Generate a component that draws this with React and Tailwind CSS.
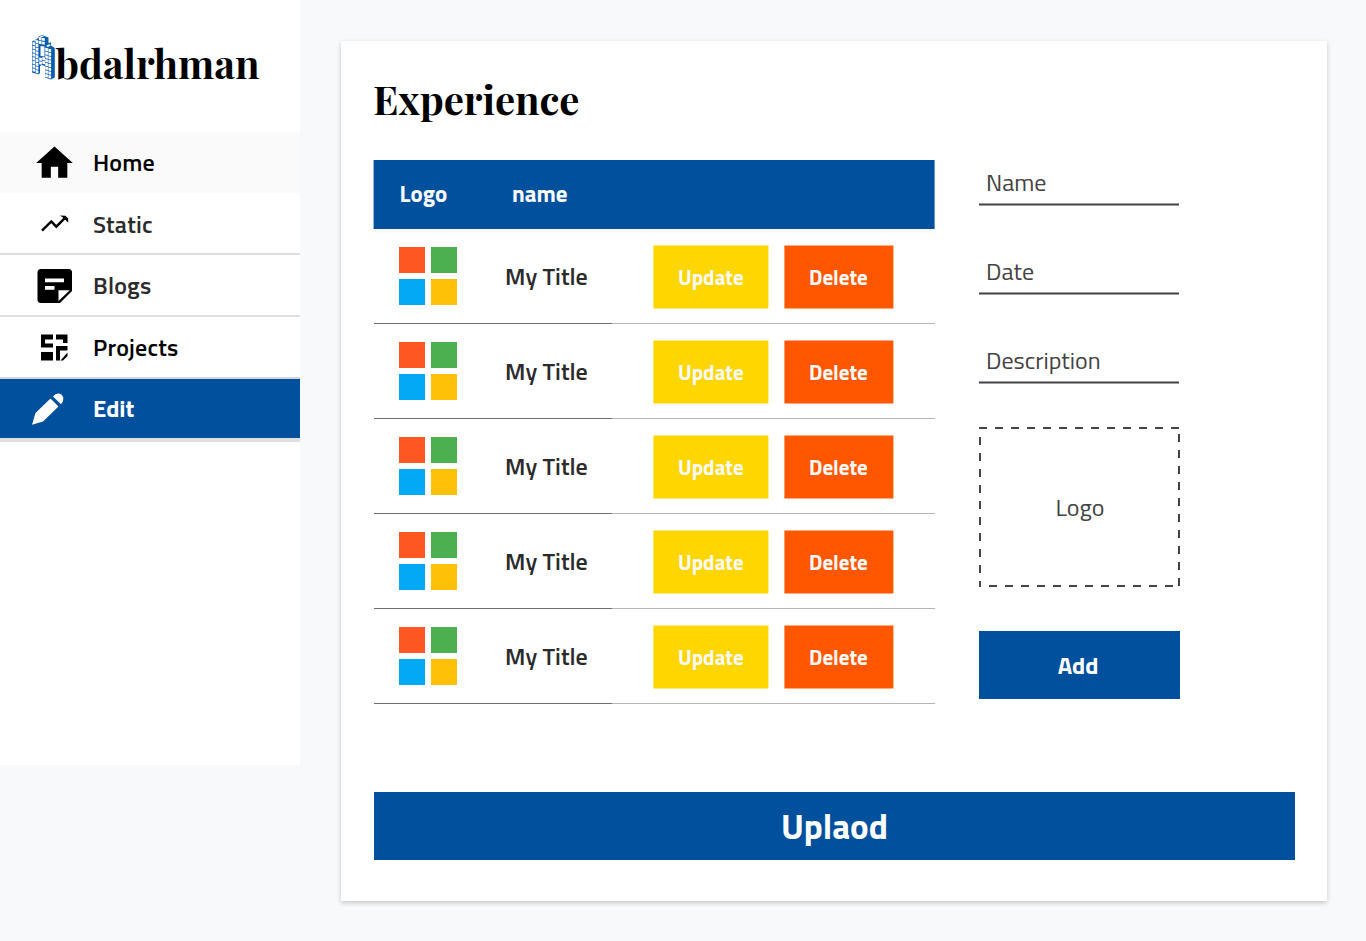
const sans = "font-['Titillium_Web','Cairo',Roboto,sans-serif]";

// Cube faces of the isometric letter: x, first y, number of faces
const faces = [
  [32.5, 42.1, 8],
  [35.7, 40.1, 9],
  [38.9, 37.1, 2],
  [42.1, 37.7, 2],
  [39.2, 57.5, 2],
  [42.3, 57.1, 2],
  [45.2, 47.8, 8],
  [48.4, 48.8, 8],
];

function Brand() {
  return (
    <svg viewBox="32 35 23.5 44.5" className="h-[44.5px] w-[23.5px] shrink-0" aria-hidden="true">
      <path fill="#0a5cb0" fillRule="evenodd" d="M32 41.500L38.500 38V36.500L42 35L48.500 37.500V43L51 42.500V45.500L54.800 48V77.500L51 79.500L45 77.500V66L42 65L40 66V73L38.500 74.500L32 72.500ZM40.500 46V56L44.500 56.500V46.500Z" />
      <g fill="#fff">
        {faces.flatMap(([x, y, n]) =>
          Array.from({ length: n }, (_, i) => (
            <path key={`${x}-${i}`} d={`M${x} ${y + i * 3.75}l2.700 .5v2.900l-2.700 -.5z`} />
          ))
        )}
        <path d="M33.500 41L36 39.600L37 40L34.500 41.500ZM39.500 36.600L42 35.600L44 36.200L41.500 37.200ZM46 46L49 44.300L51 45L48 47Z" />
      </g>
    </svg>
  );
}

const HomeIcon = () => (
  <svg viewBox="-0.27 0 24 24" className="size-11" fill="#000"><path d="M10 20v-6h4v6h5v-8h3L12 3 2 12h3v8z" /></svg>
);
const StaticIcon = () => (
  <svg viewBox="32 201.5 44 44" className="size-11" fill="none" stroke="#000" strokeWidth="2.4">
    <path d="M42 231.200L51.300 222L56.300 227.200L65 218.400" /><path d="M60 216L65.500 216.300L68.200 219V223L66.500 221.500L63 218Z" fill="#000" stroke="none" />
  </svg>
);
const BlogIcon = () => (
  <svg viewBox="32 263 44 44" className="size-11">
    <path d="M41 269H68.5Q72 269 72 272.5V291L60 303H41Q37.5 303 37.5 299.5V272.5Q37.5 269 41 269Z" />
    <path d="M45 278.5H64V282.3H45ZM45 286H54.5V289.7H45ZM58.5 290.3H69.8L58.5 301Z" fill="#fff" />
  </svg>
);
const ProjectIcon = () => (
  <svg viewBox="32 325 44 44" className="size-11">
    <path d="M41 334.500H53V339.500H45V343.500H53V347.500H41ZM56 334.500H67.500V343H63V339.500H56ZM41 352H53V360.500H41ZM56 346H67.500V350.500H60V360.500H56ZM67.500 352.500V356L63 360.500H60.500Z" />
  </svg>
);
const EditIcon = () => (
  <svg viewBox="32 387 44 44" className="size-11 overflow-visible" fill="#fff">
    <path d="M50.500 398.500L58.500 406.500L43 421.500L32 424.700L35.500 413ZM53 396.500Q57 391.500 61.500 394.500Q65.500 399 61 404.200Z" />
  </svg>
);

const items = [
  { label: "Home", Icon: HomeIcon, text: "pb-[2px]", row: "h-[61px] bg-[#fafafa] text-black font-semibold tracking-[0.2px]" },
  { label: "Static", Icon: StaticIcon, text: "pt-[2px]", row: "h-[62px] border-b-2 border-[#dedede] text-[#2b2b2b] font-semibold tracking-[0.2px]" },
  { label: "Blogs", Icon: BlogIcon, text: "", row: "h-[62px] border-b-2 border-[#dedede] text-[#2b2b2b] font-semibold tracking-[0.2px]" },
  { label: "Projects", Icon: ProjectIcon, text: "", row: "h-[62px] border-b-2 border-[#d5d5d5] text-black font-semibold tracking-[0.2px]" },
  { label: "Edit", Icon: EditIcon, text: "pb-[2px]", row: "h-[63px] border-b-4 border-[#e0e0e0] bg-[#00509d] text-white font-bold" },
];

function Sidebar() {
  return (
    <aside className="h-[765px] w-[300px] shrink-0 bg-white">
      <div className="flex h-[132px] items-start pt-[35px] pl-8">
        <Brand />
        <span className="mt-[3px] font-['Playfair_Display','Liberation_Serif',serif] text-[40px] leading-[50px] font-bold">bdalrhman</span>
      </div>
      <nav>
        {items.map(({ label, Icon, row, text }) => (
          <a key={label} className={`flex items-center gap-[17px] pl-8 text-[24px] ${row}`}>
            <Icon />
            <span className={text}>{label}</span>
          </a>
        ))}
      </nav>
    </aside>
  );
}

function MicrosoftLogo() {
  return (
    <div className="grid size-[58px] grid-cols-2 gap-1.5">
      <i className="bg-[#ff5722]" /><i className="bg-[#4caf50]" /><i className="bg-[#03a9f4]" /><i className="bg-[#ffc107]" />
    </div>
  );
}

function Table() {
  return (
    <div className="w-[561px]">
      <div className="flex h-[69px] -translate-x-[0.4px] items-center bg-[#00509d] pl-[26px] text-[23px] font-bold text-[#f8f9fb] shadow-[0_2px_5px_rgba(0,0,0,0.06)]">
        <span className="w-[112.5px]">Logo</span><span>name</span>
      </div>
      {[1, 2, 3, 4, 5].map((k) => (
        <div key={k} className="flex h-[95px]">
          <div className="flex w-[238px] items-center border-b border-[#6e6e6e] bg-white pl-[25px]">
            <MicrosoftLogo />
            <span className="ml-12 text-[24px] font-semibold whitespace-nowrap text-[#2b2b2b]">My Title</span>
          </div>
          <div className="flex flex-1 items-center border-b border-[#b5b5b5] bg-white pt-px pl-[41px] text-[21px] font-bold text-[#f8f9fb]">
            <div className="flex translate-x-[0.4px] translate-y-[0.5px] gap-4">
              <button className="h-[63px] w-[115px] bg-[#ffd600] pt-px">Update</button>
              <button className="h-[63px] w-[109px] bg-[#ff5700] pt-px pr-px">Delete</button>
            </div>
          </div>
        </div>
      ))}
    </div>
  );
}

function Form() {
  return (
    <div className="flex w-[201px] flex-col text-[24px] text-[#434343]">
      {["Name", "Date", "Description"].map((f) => (
        <div key={f} className="mb-[43px] flex h-[46px] w-[200px] -translate-y-[0.5px] items-center border-b-2 border-[#434343] pl-[7px]">{f}</div>
      ))}
      <div className="relative flex h-40 items-center justify-center pl-px">
        <svg className="absolute inset-0" width="201" height="160" fill="none" stroke="#434343" strokeWidth="2" strokeDasharray="8 8">
          <path d="M0 1H200M200 7V159M10 159H194M1 10V160" />
        </svg>
        Logo
      </div>
      <button className="mt-11 h-[68px] bg-[#00509d] pr-[3px] text-[24px] font-bold text-white">Add</button>
    </div>
  );
}

export default function App() {
  return (
    <div className={`flex h-[941px] w-[1366px] items-start overflow-hidden bg-[#f8f9fb] ${sans}`}>
      <Sidebar />
      <main className="mt-[41px] ml-[41px] h-[860px] w-[986px] bg-white pr-8 pl-[33px] shadow-[0_2px_5px_rgba(0,0,0,0.2)]">
        <h1 className="-ml-px h-[119px] pt-[31px] font-['Playfair_Display','Liberation_Serif',serif] text-[40px] leading-[54px] font-bold">Experience</h1>
        <div className="flex h-[632px] gap-11">
          <Table />
          <Form />
        </div>
        <button className="h-[68px] w-[921px] bg-[#00509d] text-[35px] font-bold text-white">Uplaod</button>
      </main>
    </div>
  );
}
